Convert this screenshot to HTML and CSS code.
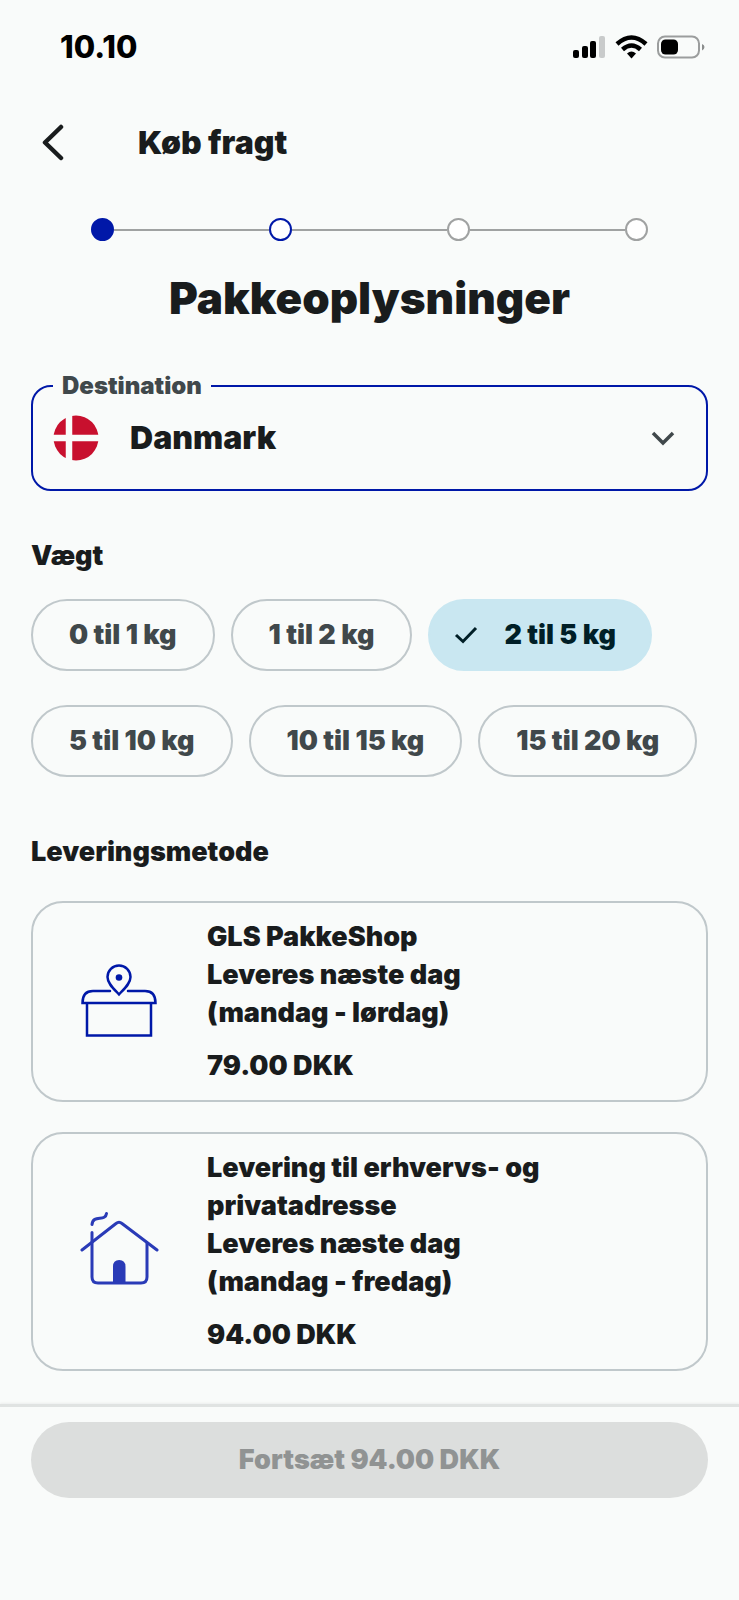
FILE: index.html
```
<!DOCTYPE html>
<html lang="da">
<head>
    <meta charset="UTF-8">
    <meta name="viewport" content="width=device-width, initial-scale=1.0">
    <title>Køb fragt</title>
    <link rel="stylesheet" href="styles.css">
</head>
<body>
    <div class="status-bar">
        <span class="time">10.10</span>
        <svg class="status-icons" width="132" height="24" viewBox="0 0 132 24" aria-hidden="true">
            <rect x="0" y="15" width="6" height="8" rx="2"/>
            <rect x="9" y="11" width="6" height="12" rx="2"/>
            <rect x="17" y="6" width="6" height="17" rx="2"/>
            <rect x="26" y="1" width="6" height="22" rx="2" fill="#c9cbcb"/>
            <g fill="none" stroke="#000" stroke-width="4.500">
                <path d="M44 9Q58.500 -4 73 9"/>
                <path d="M49.500 14.500Q58.500 6.500 67.500 14.500"/>
            </g>
            <path d="M54 18.500Q58.500 14.500 63 18.500L58.500 23.500Z"/>
            <rect x="85" y="1.500" width="41" height="21" rx="7" fill="none" stroke="#9b9d9d" stroke-width="2"/>
            <rect x="88" y="4.500" width="17" height="15" rx="4.500"/>
            <path d="M129 9Q131.500 10 131.500 12T129 15.500Z" fill="#8b8d8d"/>
        </svg>
    </div>

    <header class="header">
        <button class="back-btn" type="button" aria-label="Tilbage">
            <svg width="24" height="38" viewBox="0 0 24 38"><path d="M19 3L3 18.500L19 34" fill="none" stroke="#191c1d" stroke-width="4.500" stroke-linecap="round" stroke-linejoin="round"/></svg>
        </button>
        <span class="header-title">Køb fragt</span>
    </header>

    <main class="content">
        <div class="stepper">
            <span class="step done"></span>
            <span class="line"></span>
            <span class="step next"></span>
            <span class="line"></span>
            <span class="step"></span>
            <span class="line"></span>
            <span class="step"></span>
        </div>

        <h1>Pakkeoplysninger</h1>

        <fieldset class="destination">
            <legend><label for="destination">Destination</label></legend>
            <div class="destination-row">
                <svg class="flag" width="46" height="46" viewBox="0 0 46 46" aria-hidden="true">
                    <circle cx="23" cy="23" r="22.500" fill="#c8102e"/>
                    <path d="M16 0V46M0 23H46" stroke="#f9fbfa" stroke-width="6.500"/>
                </svg>
                <select id="destination">
                    <option>Danmark</option>
                    <option>Sverige</option>
                    <option>Norge</option>
                </select>
                <svg class="arrow" width="24" height="16" viewBox="0 0 24 16" aria-hidden="true"><path d="M2 3L12 13L22 3" fill="none" stroke="#40484b" stroke-width="3.500"/></svg>
            </div>
        </fieldset>

        <section class="weight">
            <h2>Vægt</h2>
            <div class="chips">
                <label class="chip"><input type="radio" name="weight">0 til 1 kg</label>
                <label class="chip"><input type="radio" name="weight">1 til 2 kg</label>
                <label class="chip">
                    <input type="radio" name="weight" checked>
                    <svg width="24" height="18" viewBox="0 0 24 18" aria-hidden="true"><path d="M2 9L9 15.500L22 2" fill="none" stroke="#001f27" stroke-width="3"/></svg>
                    2 til 5 kg
                </label>
                <label class="chip"><input type="radio" name="weight">5 til 10 kg</label>
                <label class="chip"><input type="radio" name="weight">10 til 15 kg</label>
                <label class="chip"><input type="radio" name="weight">15 til 20 kg</label>
            </div>
        </section>

        <section class="delivery">
            <h2>Leveringsmetode</h2>
            <div class="cards">
                <label class="card">
                    <input type="radio" name="method">
                    <svg class="card-icon" width="80" height="80" viewBox="0 0 80 80" aria-hidden="true">
                        <g fill="none" stroke="#0018a8" stroke-width="2.500">
                            <path d="M30 29H13Q2.500 29 2.500 41H75.500Q75.500 29 65 29H48" stroke-linecap="round"/>
                            <path d="M7 42V73.500H71V42"/>
                            <path d="M39 32.500C34 27 27.500 21.500 27.500 15A11.500 11.500 0 0 1 50.500 15C50.500 21.500 44 27 39 32.500Z"/>
                        </g>
                        <circle cx="39" cy="15.500" r="3.300" fill="#0018a8"/>
                    </svg>
                    <span class="card-text">
                        <span>GLS PakkeShop</span>
                        <span>Leveres næste dag<br>(mandag - lørdag)</span>
                        <span class="price">79.00 DKK</span>
                    </span>
                </label>
                <label class="card">
                    <input type="radio" name="method">
                    <svg class="card-icon" width="80" height="80" viewBox="0 0 80 80" aria-hidden="true">
                        <g fill="none" stroke="#2a3bb7" stroke-width="3" stroke-linecap="round">
                            <path d="M2 38L36 11.500Q39 9 42 11.500L77 38"/>
                            <path d="M12 20.500V65Q12 71 18 71H61Q67 71 67 65V31"/>
                            <path d="M12 12.500C13 2 25.500 10 26.500 1.500"/>
                        </g>
                        <path d="M33 71V54.500Q33 48 39.200 48T45.500 54.500V71Z" fill="#2a3bb7"/>
                    </svg>
                    <span class="card-text">
                        <span>Levering til erhvervs- og<br>privatadresse</span>
                        <span>Leveres næste dag<br>(mandag - fredag)</span>
                        <span class="price">94.00 DKK</span>
                    </span>
                </label>
            </div>
        </section>
    </main>

    <footer class="footer">
        <button class="continue-btn" type="button" disabled>Fortsæt 94.00 DKK</button>
    </footer>
</body>
</html>
```

FILE: styles.css
```
* {
    box-sizing: border-box;
}
body {
    margin: 0;
    min-height: 100vh;
    display: flex;
    flex-direction: column;
    background: #f9fbfa;
    color: #191c1d;
    font-family: Inter, "Liberation Sans", sans-serif;
    font-size: 27px;
    font-weight: 900;
    line-height: 38px;
}
svg {
    display: block;
    flex-shrink: 0;
}
.status-bar {
    height: 94px;
    padding: 0 34px 0 60px;
    display: flex;
    align-items: center;
    justify-content: space-between;
    color: #000;
}
.time {
    font-size: 31px;
    font-weight: 800;
}
.header {
    height: 98px;
    padding: 0 32px 0 42px;
    display: flex;
    align-items: center;
    gap: 72px;
}
.back-btn {
    padding: 0;
    border: 0;
    background: none;
    cursor: pointer;
}
.header-title {
    font-size: 32px;
}
.content {
    flex: 1;
    padding: 26px 31px 31px;
}

/* progress */
.stepper {
    display: flex;
    align-items: center;
    padding: 0 60px;
}
.step {
    width: 23px;
    height: 23px;
    border: 2px solid #a0a2a2;
    border-radius: 50%;
    background: #fff;
}
.step.next {
    border-color: #0018a8;
}
.step.done {
    border-color: #0018a8;
    background: #0018a8;
}
.line {
    flex: 1;
    height: 2px;
    background: #a0a2a2;
}

h1 {
    margin: 32px 0 50px;
    font-size: 44px;
    font-weight: 900;
    line-height: 50px;
    text-align: center;
}
h2 {
    margin: 0;
    font-size: 27px;
    font-weight: 900;
}

/* destination */
.destination {
    margin: 0;
    padding: 0 20px 12px;
    border: 2px solid #0018a8;
    border-radius: 20px;
}
.destination legend {
    padding: 0 9px;
    color: #40484b;
    font-size: 24px;
    line-height: 26px;
}
.destination-row {
    height: 78px;
    display: flex;
    align-items: center;
}
.destination select {
    flex: 1;
    height: 78px;
    margin-right: -24px;
    padding: 0 24px 0 31px;
    border: 0;
    appearance: none;
    background: transparent;
    color: inherit;
    font: inherit;
    font-size: 32px;
    outline: none;
}
.arrow {
    margin-right: 11px;
    pointer-events: none;
}

/* chips */
.weight {
    margin-top: 46px;
}
.chips {
    margin-top: 24px;
    display: flex;
    flex-wrap: wrap;
    gap: 34px 16px;
}
.chip {
    height: 72px;
    padding: 0 36px;
    display: flex;
    align-items: center;
    gap: 26px;
    border: 2px solid #c0c8cb;
    border-radius: 36px;
    color: #40484b;
    cursor: pointer;
}
.chip:has(:checked) {
    padding: 0 34px 0 24px;
    border-color: #c9e7f1;
    background: #c9e7f1;
    color: #001f27;
}
.chip input,
.card input {
    position: absolute;
    opacity: 0;
    pointer-events: none;
}

/* delivery methods */
.delivery {
    margin-top: 56px;
}
.cards {
    margin-top: 30px;
    display: flex;
    flex-direction: column;
    gap: 30px;
}
.card {
    padding: 15px 47px;
    display: flex;
    align-items: center;
    gap: 47px;
    border: 2px solid #c0c8cb;
    border-radius: 32px;
    cursor: pointer;
}
.card-text {
    display: flex;
    flex-direction: column;
}
.price {
    margin-top: 15px;
}

.footer {
    padding: 15px 31px 102px;
    border-top: 3px solid #e0e3e2;
    box-shadow: 0 -1px 2px #eceeed;
}
.continue-btn {
    width: 100%;
    height: 76px;
    border: 0;
    border-radius: 38px;
    background: #dcdedd;
    color: #909393;
    font: inherit;
}
```
